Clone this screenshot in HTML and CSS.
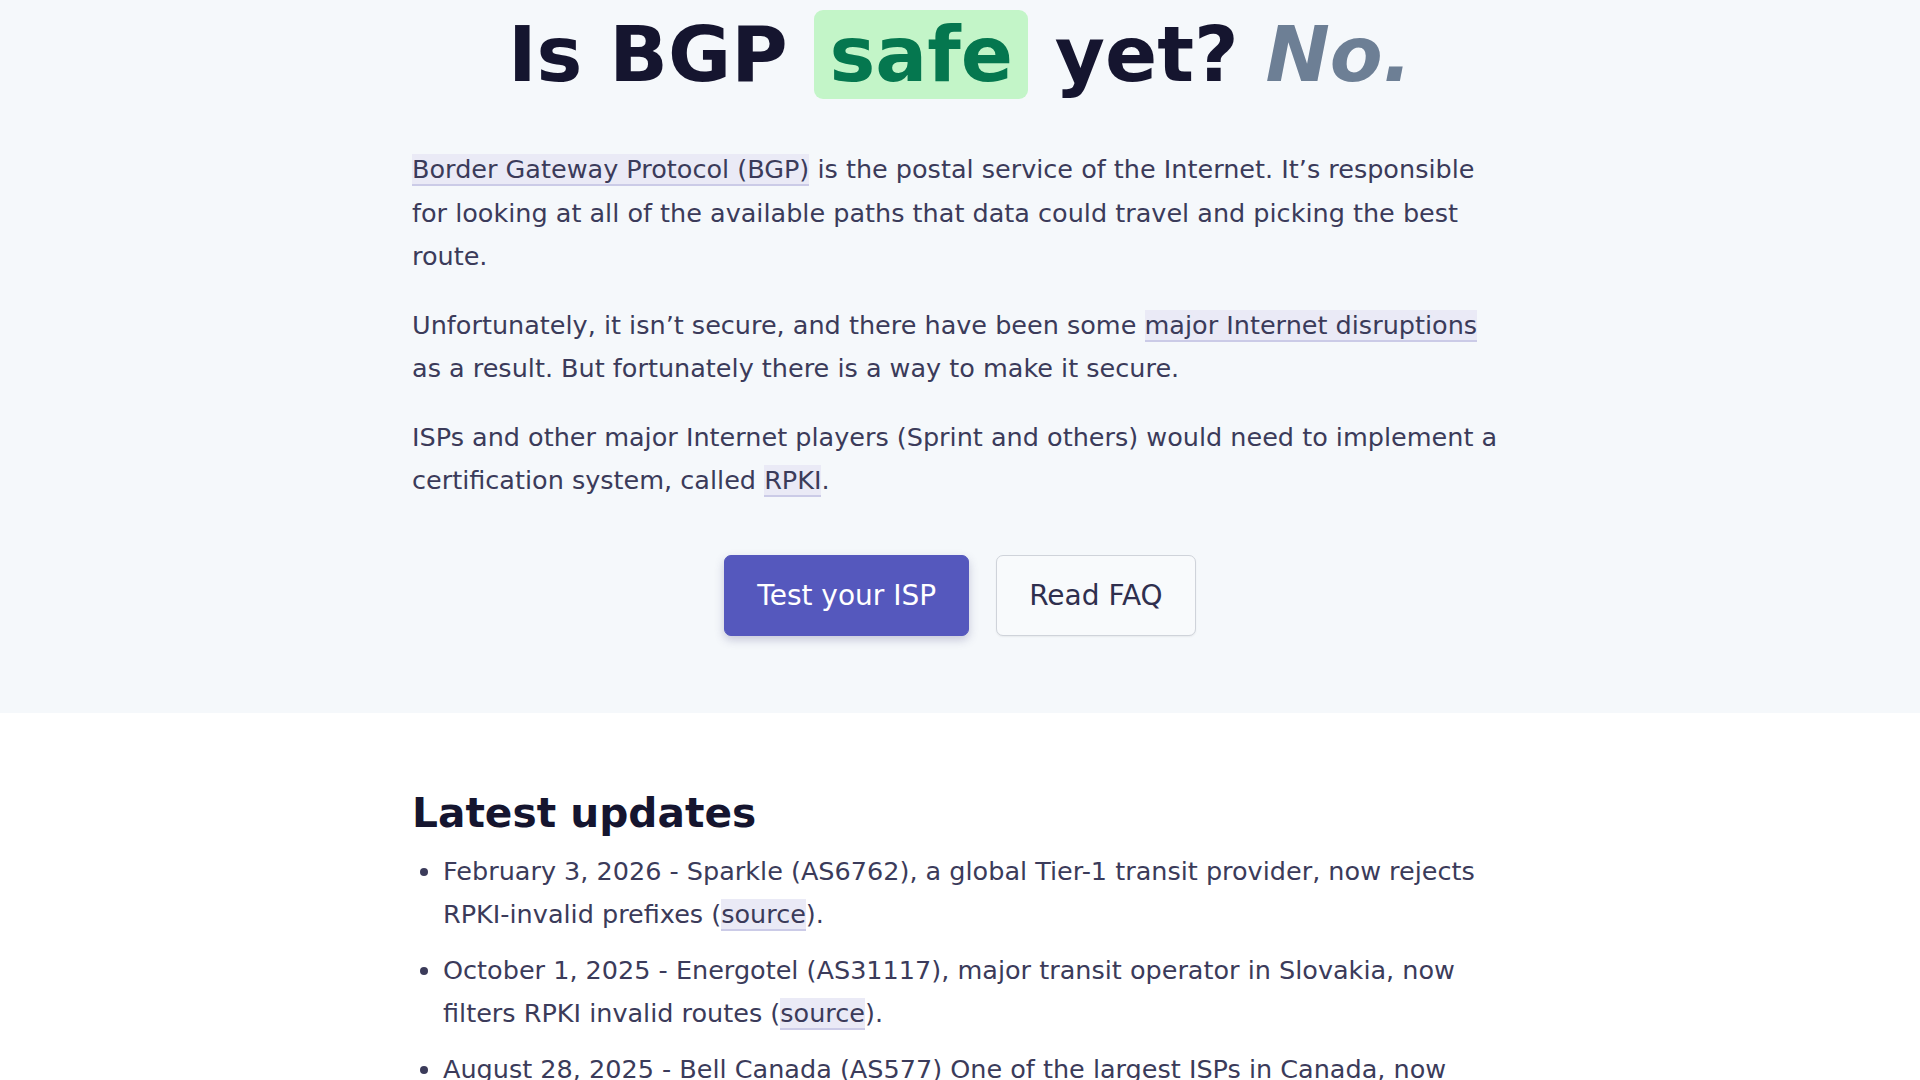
FILE: index.html
```html
<!DOCTYPE html>
<html lang="en">
<head>
<meta charset="utf-8">
<title>Is BGP safe yet?</title>
<link rel="stylesheet" href="styles.css">
</head>
<body>
<header class="hero">
  <div class="container">
    <h1 class="title">Is BGP <span class="safe">safe</span> yet? <em class="no">No.</em></h1>
    <p class="lead"><a class="link" href="#">Border Gateway Protocol (BGP)</a> is the postal service of the Internet. It’s responsible for looking at all of the available paths that data could travel and picking the best route.</p>
    <p class="lead">Unfortunately, it isn’t secure, and there have been some <a class="link" href="#">major Internet disruptions</a> as a result. But fortunately there is a way to make it secure.</p>
    <p class="lead">ISPs and other major Internet players (Sprint and others) would need to implement a certification system, called <a class="link" href="#">RPKI</a>.</p>
    <div class="actions">
      <a class="btn btn-primary" href="#">Test your ISP</a>
      <a class="btn btn-secondary" href="#">Read FAQ</a>
    </div>
  </div>
</header>
<main class="updates">
  <div class="container">
    <h2 class="section-title">Latest updates</h2>
    <ul class="update-list">
      <li>February 3, 2026 - Sparkle (AS6762), a global Tier-1 transit provider, now rejects RPKI-invalid prefixes (<a class="link" href="#">source</a>).</li>
      <li>October 1, 2025 - Energotel (AS31117), major transit operator in Slovakia, now filters RPKI invalid routes (<a class="link" href="#">source</a>).</li>
      <li>August 28, 2025 - Bell Canada (AS577) One of the largest ISPs in Canada, now signs and filters RPKI invalid routes (<a class="link" href="#">source</a>).</li>
    </ul>
  </div>
</main>
</body>
</html>
```
FILE: styles.css
```css
html, body {
  margin: 0;
  padding: 0;
}
body {
  font-family: "DejaVu Sans", "Liberation Sans", sans-serif;
  font-size: 25.5px;
  line-height: 43.5px;
  color: #3b3b5a;
  background: #ffffff;
}
.container {
  max-width: 1096px;
  margin: 0 auto;
}
.hero {
  background: #f5f8fb;
  padding: 9px 0 77px;
}
.title {
  margin: 0 0 47px;
  text-align: center;
  font-size: 77px;
  line-height: 1.2;
  font-weight: bold;
  color: #15152f;
}
.safe {
  background: #c3f5c8;
  color: #05774f;
  padding: 0 15px;
  border-radius: 9px;
}
.no {
  color: #6d7f95;
  font-style: italic;
}
.lead {
  margin: 0 0 25px;
}
.link {
  color: inherit;
  text-decoration: none;
  background: #eaeaf6;
  border-bottom: 2px solid #cbcbe7;
}
.actions {
  display: flex;
  justify-content: center;
  gap: 27px;
  margin-top: 52px;
}
.btn {
  display: inline-block;
  font-size: 28px;
  line-height: 41px;
  padding: 19px 32px;
  border-radius: 7px;
  text-decoration: none;
  border: 1px solid transparent;
}
.btn-primary {
  background: #5558bd;
  border-color: #5558bd;
  color: #ffffff;
  box-shadow: 0 4px 10px rgba(60, 60, 120, 0.25);
}
.btn-secondary {
  background: #f8fafc;
  border-color: #cfd3da;
  color: #2f2f4e;
  box-shadow: 0 1px 2px rgba(0, 0, 0, 0.06);
}
.updates {
  padding-top: 76px;
}
.section-title {
  margin: 0 0 12px;
  font-size: 40.7px;
  line-height: 1.2;
  font-weight: bold;
  color: #15152f;
}
.update-list {
  margin: 0;
  padding-left: 31px;
}
.update-list li {
  margin-bottom: 12px;
}
```
